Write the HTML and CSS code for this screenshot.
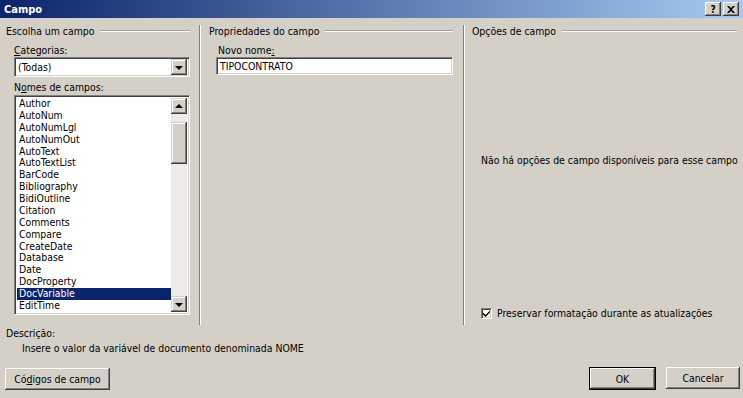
FILE: index.html
```html
<!DOCTYPE html>
<html lang="pt">
<head>
  <meta charset="UTF-8">
  <title>Campo</title>
  <link rel="stylesheet" href="styles.css">
</head>
<body>
  <div class="dialog">
    <div class="titlebar">
      <span class="title">Campo</span>
      <div class="title-btns">
        <span class="tbtn">?</span>
        <span class="tbtn">
          <svg width="8" height="7" viewBox="0 0 8 7"><path d="M0 0h2l2 2 2-2h2L5 3.5 8 7H6L4 5 2 7H0l3-3.5z" fill="#000"/></svg>
        </span>
      </div>
    </div>

    <div class="main">
      <div class="col col-left">
        <div class="group-title">Escolha um campo</div>
        <div class="label first"><u>C</u>ategorias:</div>
        <div class="combo">
          <span class="combo-text">(Todas)</span>
          <span class="sbtn"><span class="arrow down"></span></span>
        </div>
        <div class="label second">N<u>o</u>mes de campos:</div>
        <div class="listbox">
          <ul class="items" id="fieldList"></ul>
          <div class="scrollbar">
            <span class="sbtn"><span class="arrow up"></span></span>
            <div class="track">
              <span class="thumb"></span>
            </div>
            <span class="sbtn"><span class="arrow down"></span></span>
          </div>
        </div>
      </div>

      <div class="col col-mid">
        <div class="group-title">Propriedades do campo</div>
        <div class="label first indent">Novo nome<u>:</u></div>
        <div class="textbox">TIPOCONTRATO</div>
      </div>

      <div class="col col-right">
        <div class="group-title">Opções de campo</div>
        <div class="no-options">Não há opções de campo disponíveis para esse campo</div>
        <label class="check">
          <span class="checkbox">
            <svg width="7" height="7" viewBox="0 0 7 7"><path d="M0 2.5l2.5 2.5L7 0.5V2.5L2.5 7 0 4.5z" fill="#000"/></svg>
          </span>
          Preservar formatação durante as atualizações
        </label>
      </div>
    </div>

    <div class="desc">
      <div class="desc-label">Descrição:</div>
      <div class="desc-text">Insere o valor da variável de documento denominada NOME</div>
    </div>

    <div class="footer">
      <span class="btn btn-codes">Có<u>d</u>igos de campo</span>
      <div class="footer-right">
        <span class="btn btn-default">OK</span>
        <span class="btn btn-cancel">Cancelar</span>
      </div>
    </div>
  </div>

  <script>
    const fields = ['Author', 'AutoNum', 'AutoNumLgl', 'AutoNumOut', 'AutoText', 'AutoTextList',
      'BarCode', 'Bibliography', 'BidiOutline', 'Citation', 'Comments', 'Compare',
      'CreateDate', 'Database', 'Date', 'DocProperty', 'DocVariable', 'EditTime'];
    const list = document.getElementById('fieldList');
    fields.forEach(name => {
      const li = document.createElement('li');
      li.textContent = name;
      if (name === 'DocVariable') li.className = 'selected';
      list.appendChild(li);
    });
  </script>
</body>
</html>
```

FILE: styles.css
```css
* {
  box-sizing: border-box;
}

body {
  margin: 0;
  font-family: 'DejaVu Sans Condensed', 'DejaVu Sans', sans-serif;
  font-size: 10.4px;
  color: #000;
  background: #d4d0c8;
}

u {
  text-decoration: underline;
  text-underline-offset: 1px;
}

.dialog {
  width: 743px;
  height: 398px;
  background: #d4d0c8;
  display: flex;
  flex-direction: column;
  overflow: hidden;
}

/* title bar */
.titlebar {
  height: 18px;
  flex: none;
  display: flex;
  align-items: center;
  justify-content: space-between;
  padding: 0 4px;
  background: linear-gradient(to right, #0a246a, #a6caf0);
}

.title {
  color: #fff;
  font-weight: bold;
  font-size: 11px;
}

.title-btns {
  display: flex;
  gap: 2px;
}

.tbtn {
  width: 16px;
  height: 14px;
  display: flex;
  align-items: center;
  justify-content: center;
  font-weight: bold;
  font-size: 10px;
  background: #d4d0c8;
  box-shadow: inset -1px -1px #404040, inset 1px 1px #fff, inset -2px -2px #808080;
}

/* columns */
.main {
  height: 307px;
  flex: none;
  display: grid;
  grid-template-columns: 199px 264px 1fr;
  padding-top: 7px;
}

.col {
  display: flex;
  flex-direction: column;
  min-width: 0;
}

.col-left {
  padding: 0 9px 0 6px;
}

.col-mid {
  border-left: 1px solid #808080;
  box-shadow: inset 1px 0 #fff;
  padding: 0 10px 0 9px;
}

.col-right {
  border-left: 1px solid #808080;
  box-shadow: inset 1px 0 #fff;
  padding: 0 6px 0 8px;
}

.group-title {
  display: flex;
  align-items: center;
  height: 12px;
  line-height: 12px;
  color: #000;
}

.group-title::after {
  content: '';
  flex: 1;
  margin-left: 6px;
  border-top: 1px solid #a0a0a0;
  border-bottom: 1px solid #fff;
}

.label {
  height: 12px;
  line-height: 12px;
  margin-left: 8px;
}

.label.first {
  margin-top: 7px;
  margin-bottom: 1px;
}

.label.second {
  margin-top: 4px;
  margin-bottom: 2px;
}

.label.indent {
  margin-left: 9px;
}

/* sunken controls */
.combo,
.textbox,
.listbox,
.checkbox {
  background: #fff;
  border: 1px solid;
  border-color: #808080 #fff #fff #808080;
  box-shadow: inset 1px 1px #404040, inset -1px -1px #d4d0c8;
}

.combo {
  height: 20px;
  margin-left: 8px;
  display: flex;
  align-items: center;
  justify-content: space-between;
  padding: 0 2px 0 3px;
}

.combo .sbtn {
  height: 16px;
}

.textbox {
  height: 18px;
  margin-left: 7px;
  line-height: 16px;
  padding-left: 3px;
}

.sbtn {
  width: 16px;
  height: 16px;
  flex: none;
  display: flex;
  align-items: center;
  justify-content: center;
  background: #d4d0c8;
  box-shadow: inset -1px -1px #404040, inset 1px 1px #d4d0c8, inset -2px -2px #808080, inset 2px 2px #fff;
}

.arrow {
  width: 0;
  height: 0;
  border-left: 4px solid transparent;
  border-right: 4px solid transparent;
}

.arrow.down {
  border-top: 4px solid #000;
  margin-top: 1px;
}

.arrow.up {
  border-bottom: 4px solid #000;
  margin-top: -1px;
}

/* list */
.listbox {
  height: 220px;
  margin-left: 8px;
  display: flex;
  padding: 2px;
}

.items {
  list-style: none;
  margin: 0;
  padding: 0;
  flex: 1;
  overflow: hidden;
}

.items li {
  height: 11.88px;
  line-height: 11.88px;
  padding-left: 2px;
}

.items li.selected {
  background: #0a246a;
  color: #fff;
}

.scrollbar {
  width: 16px;
  display: flex;
  flex-direction: column;
}

.track {
  flex: 1;
  background: #ecebe7;
  padding-top: 8px;
}

.thumb {
  display: block;
  width: 16px;
  height: 42px;
  background: #d4d0c8;
  box-shadow: inset -1px -1px #404040, inset 1px 1px #d4d0c8, inset -2px -2px #808080, inset 2px 2px #fff;
}

/* right column */
.no-options {
  margin: 117px 0 0 9px;
  height: 12px;
  line-height: 12px;
  white-space: nowrap;
}

.check {
  margin: auto 0 6px 9px;
  display: flex;
  align-items: center;
  gap: 5px;
  height: 12px;
  white-space: nowrap;
}

.checkbox {
  width: 11px;
  height: 11px;
  display: flex;
  align-items: center;
  justify-content: center;
  padding-top: 1px;
}

/* description */
.desc {
  padding: 2px 0 0 6px;
}

.desc-label {
  height: 12px;
  line-height: 12px;
}

.desc-text {
  margin: 3px 0 0 16px;
  height: 12px;
  line-height: 12px;
}

/* buttons */
.footer {
  margin-top: auto;
  padding: 0 3px 8px 5px;
  display: flex;
  justify-content: space-between;
  align-items: flex-end;
}

.footer-right {
  display: flex;
  gap: 10px;
}

.btn {
  height: 22px;
  display: flex;
  align-items: center;
  justify-content: center;
  background: #d4d0c8;
  box-shadow: inset -1px -1px #404040, inset 1px 1px #fff, inset -2px -2px #808080;
}

.btn-codes {
  width: 105px;
}

.btn-default {
  width: 67px;
  border: 1px solid #000;
  height: 23px;
}

.btn-cancel {
  width: 74px;
}
```
